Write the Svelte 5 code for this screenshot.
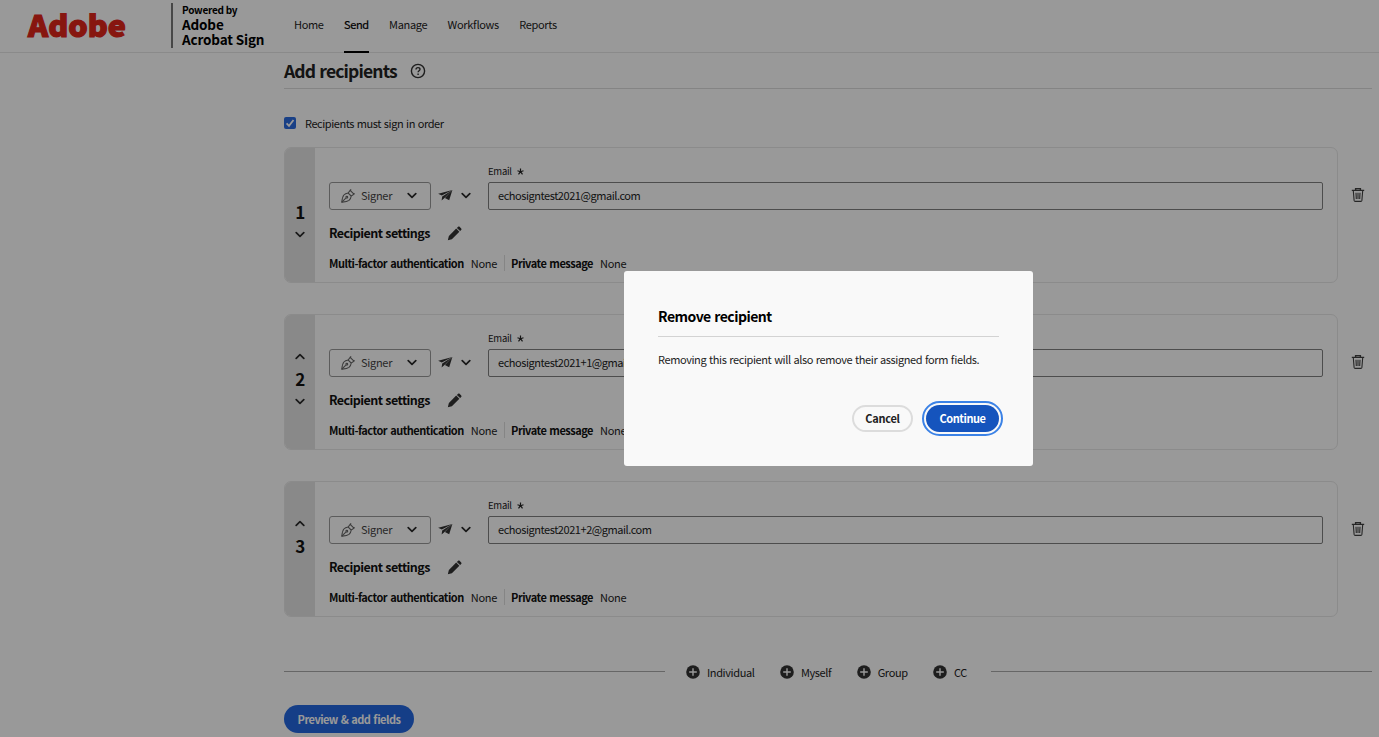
<script>
	const nav = ['Home', 'Send', 'Manage', 'Workflows', 'Reports'];
	const adders = ['Individual', 'Myself', 'Group', 'CC'];

	let active = 'Send';
	let inOrder = true;
	let showDialog = true;

	let recipients = [
		{ email: 'echosigntest2021@gmail.com' },
		{ email: 'echosigntest2021+1@gmail.com' },
		{ email: 'echosigntest2021+2@gmail.com' }
	];

	function closeDialog() {
		showDialog = false;
	}

	function removeLast() {
		recipients = recipients.slice(0, -1);
		showDialog = false;
	}
</script>

<div class="page">
	<header>
		<svg class="logo" viewBox="0 0 112 48" width="112" height="48">
			<text x="2" y="37" textLength="98" lengthAdjust="spacingAndGlyphs">Adobe</text>
		</svg>
		<div class="powered">
			<span class="small">Powered by</span>
			<span>Adobe</span>
			<span>Acrobat Sign</span>
		</div>
		<nav>
			{#each nav as item}
				<button class="tab" class:active={item === active} on:click={() => (active = item)}>{item}</button>
			{/each}
		</nav>
	</header>

	<main>
		<div class="heading">
			<h1>Add recipients</h1>
			<svg width="16" height="16" viewBox="0 0 16 16" fill="none" stroke="#333" stroke-width="1.4">
				<circle cx="8" cy="8" r="6.6" />
				<path d="M6 6.4C6 5.2 6.9 4.6 8 4.6s2 .7 2 1.7C10 7.7 8.1 7.7 8.1 9.3" />
				<path d="M8.1 10.4v1.5" />
			</svg>
		</div>

		<label class="order">
			<input type="checkbox" bind:checked={inOrder} />
			<span class="box">
				{#if inOrder}
					<svg width="12" height="12" viewBox="0 0 12 12" fill="none" stroke="#fff" stroke-width="1.8">
						<path d="M2.6 6.3L5 8.8 9.5 3" />
					</svg>
				{/if}
			</span>
			<span class="order-text">Recipients must sign in order</span>
		</label>

		<div class="list">
			{#each recipients as recipient, i}
				<div class="row">
					<section class="card">
						<div class="side">
							<svg class="chev" class:hidden={i === 0} width="10" height="7" viewBox="0 0 10 7"><path d="M1.2 5.4L5 1.7l3.8 3.7" /></svg>
							<b>{i + 1}</b>
							<svg class="chev" class:hidden={i === recipients.length - 1} width="10" height="7" viewBox="0 0 10 7"><path d="M1.2 1.6L5 5.3l3.8-3.7" /></svg>
						</div>
						<div class="body">
							<div class="fields">
								<button class="role">
									<svg width="14" height="14" viewBox="0 0 14 14" fill="none" stroke="#666" stroke-width="1.1">
										<path d="M.8 13.2c.3-2.6.5-5.4 2.1-7.2C4 4.8 5.7 4.3 7.2 4l3 3c-.2 1.7-.9 3.3-2.2 4.4-1.9 1.5-4.5 1.6-7.2 1.8z" />
										<path d="M.8 13.2l4-4M7.2 4l1.9-2.6L13 5.2 10.2 7M9 1.4L10.2.5M12.6 5.2l1-.9" />
										<circle cx="5.8" cy="8.2" r=".9" />
									</svg>
									<span>Signer</span>
									<svg class="chev" width="10" height="7" viewBox="0 0 10 7"><path d="M1.2 1.6L5 5.3l3.8-3.7" /></svg>
								</button>
								<button class="delivery" aria-label="Delivery method">
									<svg width="15" height="13" viewBox="0 0 15 13" fill="#333">
										<path d="M14.4 1L.2 4.8l3.6 1.7z" />
										<path d="M14.4 1L4.2 7.5 3.6 11.6l2.6-2.4z" />
										<path d="M14.4 1L6.9 9l4.3 2.3z" />
									</svg>
									<svg class="chev" width="10" height="7" viewBox="0 0 10 7"><path d="M1.2 1.6L5 5.3l3.8-3.7" /></svg>
								</button>
								<div class="email">
									<label for="email-{i}">Email <svg width="7" height="7" viewBox="0 0 7 7" stroke="#222" stroke-width="1.2"><path d="M3.5 3.7V.5M3.5 3.7L.5 2.7M3.5 3.7l3-1M3.5 3.7l-2 2.7M3.5 3.7l2 2.7" /></svg></label>
									<input id="email-{i}" type="text" bind:value={recipient.email} />
								</div>
							</div>
							<div class="settings">
								<h3>Recipient settings</h3>
								<svg width="15" height="15" viewBox="0 0 15 15" fill="#333">
									<path d="M9.2 2.6l3.2 3.1-7.5 7.5L.8 14.3l1.1-4.2z" />
									<path d="M9.9 1.9L11.1.8c.5-.5 1-.5 1.5 0l1.6 1.6c.5.5.5 1 0 1.5L13.1 5z" />
								</svg>
							</div>
							<div class="details">
								<b class="mfa">Multi-factor authentication</b>
								<span class="none">None</span>
								<b class="pm">Private message</b>
								<span>None</span>
							</div>
						</div>
					</section>
					<button class="trash" aria-label="Remove recipient" on:click={() => (showDialog = true)}>
						<svg width="14" height="16" viewBox="0 0 14 16" fill="none" stroke="#404040" stroke-width="1.1">
							<path d="M.8 3.4h12.4M4.6 3.2V1.6h4.8v1.6" stroke-width="1.4" />
							<path d="M2.3 3.8l.8 9.6c.1.7.4 1 1 1h5.8c.6 0 .9-.3 1-1l.8-9.6M5 5.8l.3 6.2M7 5.8V12M9 5.8L8.7 12" />
						</svg>
					</button>
				</div>
			{/each}
		</div>

		<div class="adders">
			<hr />
			<div class="add-group">
				{#each adders as name}
					<button class="add">
						<svg width="14" height="14" viewBox="0 0 14 14">
							<circle cx="7" cy="7" r="6.8" fill="#333" />
							<path d="M7 3.2v7.6M3.2 7h7.6" stroke="#fff" stroke-width="1.4" />
						</svg>
						<span>{name}</span>
					</button>
				{/each}
			</div>
			<hr />
		</div>

		<button class="primary preview">Preview &amp; add fields</button>
	</main>

	{#if showDialog}
		<div class="overlay">
			<div class="dialog" role="dialog" aria-labelledby="dialog-title">
				<h2 id="dialog-title">Remove recipient</h2>
				<p>Removing this recipient will also remove their assigned form fields.</p>
				<div class="actions">
					<button class="secondary" on:click={closeDialog}>Cancel</button>
					<button class="primary focused" on:click={removeLast}>Continue</button>
				</div>
			</div>
		</div>
	{/if}
</div>

<style>
	:global(body) {
		overflow: hidden;
		background: #fff;
	}

	.page {
		position: relative;
		width: 100vw;
		height: 100vh;
		overflow: hidden;
		box-sizing: border-box;
		font-family: 'Noto Sans CJK SC', 'Open Sans', sans-serif;
		font-size: 11px;
		letter-spacing: -0.28px;
		font-feature-settings: 'liga' 1;
		color: #222;
	}

	.page * {
		box-sizing: border-box;
	}

	button {
		font: inherit;
		letter-spacing: inherit;
		color: inherit;
		background: none;
		border: none;
		padding: 0;
		margin: 0;
		white-space: nowrap;
	}

	svg {
		display: block;
		flex: none;
	}

	h1, h2, h3, p {
		margin: 0;
	}

	header {
		display: flex;
		height: 53px;
		padding-left: 26px;
		border-bottom: 1px solid #e6e6e6;
	}

	.logo {
		overflow: visible;
	}

	.logo text {
		font-size: 30px;
		font-weight: 900;
		letter-spacing: 0;
		fill: #e2261a;
		stroke: #e2261a;
		stroke-width: 1.2;
	}

	.powered {
		display: flex;
		flex-direction: column;
		width: 113px;
		height: 45px;
		margin: 3px 0 0 33px;
		padding-left: 9px;
		border-left: 2px solid #777;
		font-size: 13.5px;
		line-height: 15px;
		font-weight: 700;
		letter-spacing: -0.15px;
		color: #000;
		white-space: nowrap;
	}

	.powered .small {
		font-size: 10px;
		line-height: 14px;
		letter-spacing: -0.25px;
	}

	nav {
		display: flex;
		gap: 20.3px;
		padding-left: 10px;
	}

	.tab {
		height: 53px;
		padding-bottom: 4px;
		border-bottom: 2px solid transparent;
		letter-spacing: -0.33px;
	}

	.tab.active {
		color: #000;
		-webkit-text-stroke: 0.2px #000;
		border-color: #000;
	}

	main {
		padding-left: 284px;
	}

	.heading {
		display: flex;
		align-items: center;
		gap: 13px;
		width: 1088px;
		height: 36px;
		border-bottom: 1px solid #ddd;
	}

	h1 {
		font-size: 17.5px;
		line-height: 36px;
		letter-spacing: -0.85px;
		word-spacing: 1px;
	}

	.order {
		display: flex;
		align-items: center;
		height: 20px;
		margin-top: 24px;
	}

	.order-text {
		letter-spacing: -0.45px;
		word-spacing: 0.9px;
	}

	.order input {
		display: none;
	}

	.box {
		width: 12px;
		height: 12px;
		margin-right: 9px;
		border-radius: 2px;
		background: #2b6be0;
	}

	.list {
		display: grid;
		gap: 31px;
		margin-top: 14px;
	}

	.row {
		display: flex;
		height: 136px;
	}

	.card {
		display: flex;
		width: 1054px;
		border: 1px solid #e8e8e8;
		border-radius: 7px;
		overflow: hidden;
	}

	.side {
		display: flex;
		flex-direction: column;
		align-items: center;
		justify-content: center;
		width: 30px;
		padding-bottom: 7px;
		background: #e4e4e4;
	}

	.side b {
		height: 38px;
		font-size: 17px;
		line-height: 38px;
		color: #111;
	}

	.chev {
		fill: none;
		stroke: #2b2b2b;
		stroke-width: 1.7;
		stroke-linecap: round;
		stroke-linejoin: round;
	}

	.hidden {
		visibility: hidden;
	}

	.body {
		flex: 1;
		padding: 13px 14px 0 14px;
	}

	.fields {
		display: flex;
		align-items: flex-end;
		height: 49px;
	}

	.role {
		display: flex;
		align-items: center;
		width: 102px;
		height: 28px;
		padding: 0 0 1px 11px;
		border: 1px solid #999;
		border-radius: 3px;
		color: #444;
	}

	.role span {
		width: 46px;
		margin-left: 6px;
		padding-bottom: 2px;
		text-align: left;
	}

	.delivery {
		display: flex;
		align-items: center;
		gap: 8px;
		width: 57px;
		height: 28px;
		padding: 0 0 1px 7px;
	}

	.email {
		flex: 1;
	}

	.email label {
		display: flex;
		align-items: center;
		gap: 5px;
		height: 21px;
		padding-bottom: 1px;
		font-size: 9.5px;
		letter-spacing: -0.25px;
	}

	.email input {
		display: block;
		width: 100%;
		height: 28px;
		padding: 0 9px 2px;
		border: 1px solid #808080;
		border-radius: 2px;
		background: none;
		font: inherit;
		letter-spacing: -0.45px;
		color: inherit;
	}

	.settings {
		display: flex;
		align-items: center;
		gap: 17px;
		height: 46px;
		color: #111;
	}

	h3 {
		margin-top: -1px;
		font-size: 12.5px;
		line-height: 45px;
		letter-spacing: -0.55px;
		word-spacing: 0.5px;
	}

	.details {
		display: flex;
		align-items: center;
		height: 16px;
		margin-top: -1px;
	}

	.details b {
		color: #111;
		letter-spacing: -0.49px;
		word-spacing: 1px;
	}

	.none {
		margin-left: 7px;
		padding-right: 7px;
		border-right: 1px solid #dedede;
	}

	.details .pm {
		margin: 0 7px 0 6px;
	}

	.trash {
		display: flex;
		margin: 40px 0 0 13px;
		align-self: flex-start;
	}

	.adders {
		display: flex;
		align-items: center;
		gap: 21px;
		width: 1088px;
		height: 20px;
		margin-top: 44px;
	}

	hr {
		width: 381px;
		height: 1px;
		margin: 0;
		border: none;
		background: #aaa;
	}

	.add-group {
		display: flex;
		flex: 1;
		justify-content: space-between;
		padding: 2px 3px 0 0;
	}

	.add {
		display: flex;
		align-items: center;
		gap: 7px;
	}

	.add span {
		letter-spacing: -0.38px;
	}

	.primary {
		height: 27px;
		padding-bottom: 1px;
		border-radius: 14px;
		background: #1554bd;
		color: #fff;
		font-weight: 700;
	}

	.preview {
		width: 130px;
		height: 28px;
		margin-top: 24px;
		background: #2468e2;
		letter-spacing: -0.52px;
		word-spacing: 0.9px;
	}

	.overlay {
		position: absolute;
		inset: 0;
		background: rgba(0, 0, 0, 0.4);
	}

	.dialog {
		position: absolute;
		left: 624px;
		top: 271px;
		width: 409px;
		height: 195px;
		padding: 28px 34px;
		border-radius: 3px;
		background: #f9f9f9;
	}

	h2 {
		height: 38px;
		border-bottom: 1px solid #d3d3d3;
		font-size: 14px;
		line-height: 34px;
		letter-spacing: -0.5px;
		word-spacing: 0.8px;
		color: #000;
	}

	p {
		height: 46px;
		line-height: 45px;
		white-space: nowrap;
		letter-spacing: -0.4px;
		word-spacing: 0.75px;
	}

	.actions {
		display: flex;
		justify-content: flex-end;
		gap: 13px;
		margin-top: 22px;
	}

	.secondary {
		width: 61px;
		height: 27px;
		padding-bottom: 1px;
		border: 2px solid #dcdcdc;
		border-radius: 14px;
		font-weight: 700;
	}

	.focused {
		width: 73px;
		outline: 2px solid #3b82e6;
		outline-offset: 2px;
		letter-spacing: -0.45px;
	}
</style>
